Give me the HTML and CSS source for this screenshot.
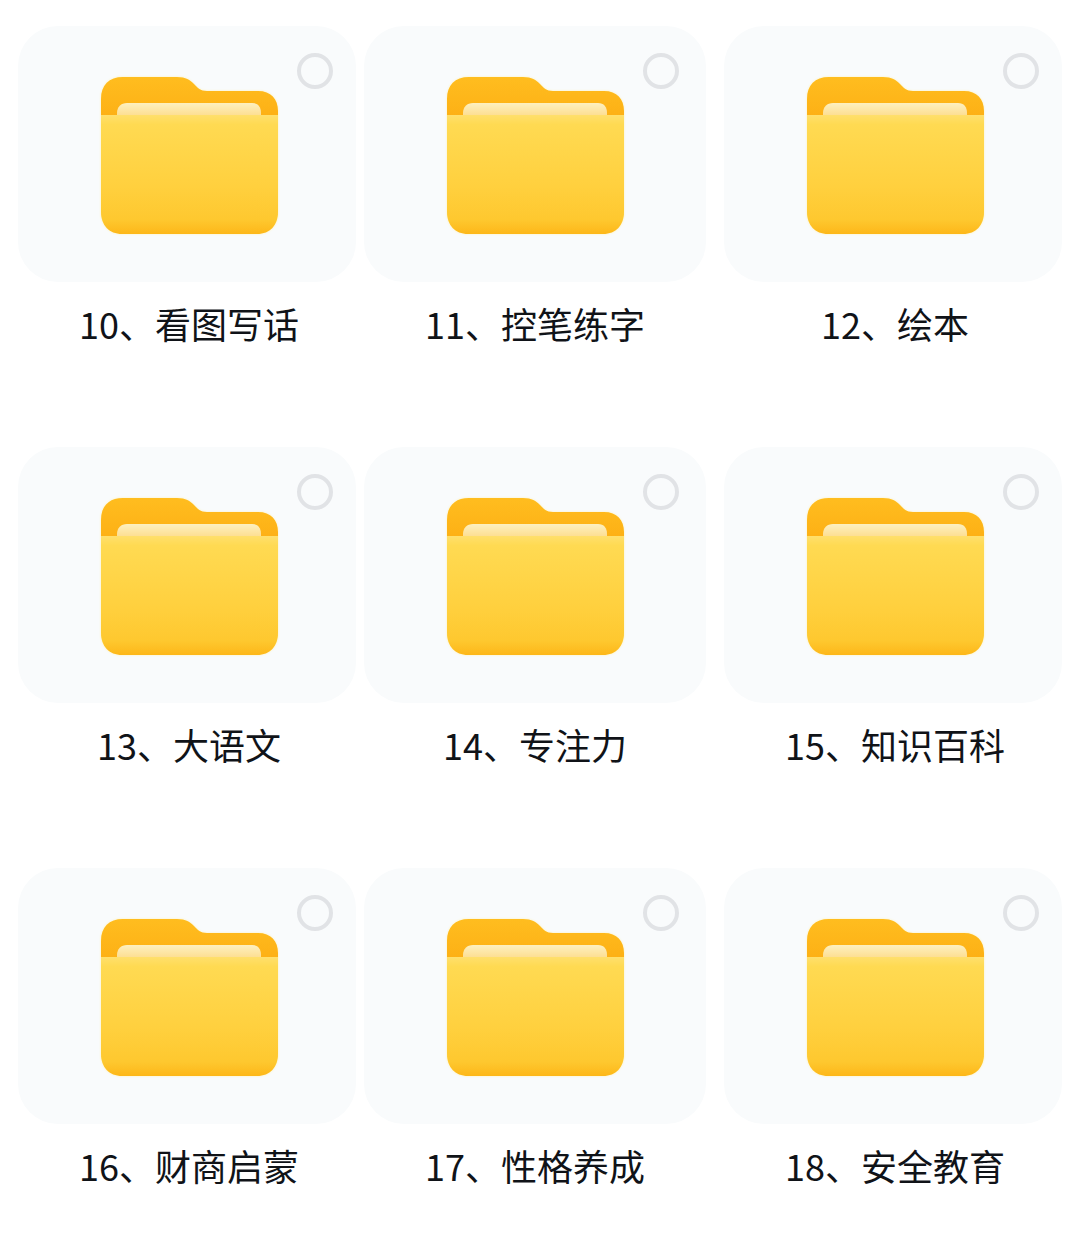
FILE: index.html
```html
<!DOCTYPE html>
<html lang="zh-CN">
<head>
    <meta charset="UTF-8">
    <meta name="viewport" content="width=device-width, initial-scale=1.0">
    <title>文件夹</title>
    <link rel="stylesheet" href="styles.css">
</head>
<body>
    <svg class="defs" aria-hidden="true">
        <defs>
            <linearGradient id="backFill" x1="0" y1="0" x2="0" y2="1">
                <stop offset="0" stop-color="#ffbd1f"/>
                <stop offset="1" stop-color="#fdb015"/>
            </linearGradient>
            <linearGradient id="paperFill" x1="0" y1="0" x2="0" y2="1">
                <stop offset="0" stop-color="#fdf0c0"/>
                <stop offset="1" stop-color="#fddc8c"/>
            </linearGradient>
            <linearGradient id="frontFill" x1="0" y1="0" x2="0" y2="1">
                <stop offset="0" stop-color="#ffdf6c"/>
                <stop offset="0.08" stop-color="#ffda52"/>
                <stop offset="0.6" stop-color="#ffd03e"/>
                <stop offset="0.88" stop-color="#fec82f"/>
                <stop offset="1" stop-color="#fdb719"/>
            </linearGradient>
            <symbol id="folder" viewBox="0 0 177 157">
                <path fill="url(#backFill)" d="M0 40V22C0 8 8 0 22 0H76C85 0 89 3 93 7C97 11 99 14 106 14H157C170 14 177 22 177 34V40Z"/>
                <path fill="url(#paperFill)" d="M16 40V36C16 30 20 26 26 26H151C157 26 160 30 160 36V40Z"/>
                <path fill="url(#frontFill)" d="M0 38H177V135C177 148 169 157 156 157H21C8 157 0 148 0 135Z"/>
            </symbol>
        </defs>
    </svg>

    <div class="grid">
        <div class="tile">
            <div class="card">
                <svg class="folder"><use href="#folder"/></svg>
                <span class="check"></span>
            </div>
            <div class="name">10、看图写话</div>
        </div>
        <div class="tile tile-wide">
            <div class="card">
                <svg class="folder"><use href="#folder"/></svg>
                <span class="check"></span>
            </div>
            <div class="name">11、控笔练字</div>
        </div>
        <div class="tile">
            <div class="card">
                <svg class="folder"><use href="#folder"/></svg>
                <span class="check"></span>
            </div>
            <div class="name">12、绘本</div>
        </div>

        <div class="tile">
            <div class="card">
                <svg class="folder"><use href="#folder"/></svg>
                <span class="check"></span>
            </div>
            <div class="name">13、大语文</div>
        </div>
        <div class="tile tile-wide">
            <div class="card">
                <svg class="folder"><use href="#folder"/></svg>
                <span class="check"></span>
            </div>
            <div class="name">14、专注力</div>
        </div>
        <div class="tile">
            <div class="card">
                <svg class="folder"><use href="#folder"/></svg>
                <span class="check"></span>
            </div>
            <div class="name">15、知识百科</div>
        </div>

        <div class="tile">
            <div class="card">
                <svg class="folder"><use href="#folder"/></svg>
                <span class="check"></span>
            </div>
            <div class="name">16、财商启蒙</div>
        </div>
        <div class="tile tile-wide">
            <div class="card">
                <svg class="folder"><use href="#folder"/></svg>
                <span class="check"></span>
            </div>
            <div class="name">17、性格养成</div>
        </div>
        <div class="tile">
            <div class="card">
                <svg class="folder"><use href="#folder"/></svg>
                <span class="check"></span>
            </div>
            <div class="name">18、安全教育</div>
        </div>
    </div>
</body>
</html>
```

FILE: styles.css
```css
body {
    margin: 0;
    background-color: #fff;
    font-family: "Noto Sans CJK SC", "Noto Sans", sans-serif;
    color: #101318;
}

.defs {
    position: absolute;
    width: 0;
    height: 0;
}

.grid {
    display: grid;
    grid-template-columns: 346px 360px 338px;
    row-gap: 99px;
    padding: 26px 0 0 18px;
}

.tile {
    width: 338px;
}

.tile-wide {
    width: 342px;
}

.card {
    position: relative;
    height: 256px;
    box-sizing: border-box;
    padding: 51px 0 0 83px;
    background-color: #f9fbfc;
    border-radius: 40px;
}

.folder {
    display: block;
    width: 177px;
    height: 157px;
    filter: drop-shadow(0 0 1px #fff3b8);
}

/* round select mark in the card's corner */
.check {
    position: absolute;
    top: 27px;
    left: 279px;
    width: 36px;
    height: 36px;
    box-sizing: border-box;
    border: 4px solid #e1e3e6;
    border-radius: 50%;
}

.name {
    width: 342px;
    margin-top: 16px;
    font-size: 36px;
    line-height: 50px;
    text-align: center;
    white-space: nowrap;
}
```
